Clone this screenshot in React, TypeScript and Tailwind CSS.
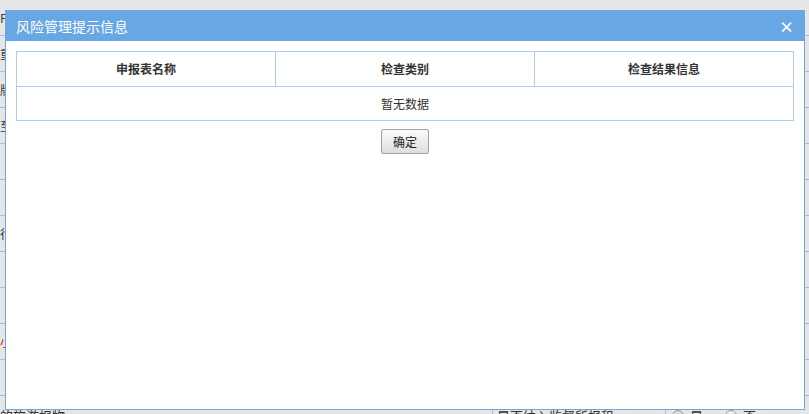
const ROWS = [
  { y: 0, left: 'F', right: '' },
  { y: 36, left: '重', right: '' },
  { y: 72, left: '牌', right: '' },
  { y: 108, left: '至', right: '' },
  { y: 144, left: '', right: '' },
  { y: 180, left: '', right: '' },
  { y: 216, left: '行', right: '' },
  { y: 252, left: '', right: '' },
  { y: 288, left: '', right: '' },
  { y: 324, left: '小', right: '' },
  { y: 360, left: '', right: '' },
]

function BackgroundPage() {
  return (
    <div className="flex flex-col bg-[#e6e6e6]">
      {ROWS.map((r, i) => (
        <div
          key={i}
          className="flex h-[36px] shrink-0 items-center border-b border-[#a3bedc] text-[12px] text-[#333]"
        >
          <span className={i === 9 ? 'text-[#b22]' : ''}>{r.left}</span>
        </div>
      ))}
      <div className="flex h-[36px] shrink-0 items-start text-[13px] text-[#333]">
        <div className="w-[492px] pt-[13px] leading-none">的旅游报物</div>
        <div className="w-[173px] border-l border-[#a3bedc] pl-[4px] pt-[13px] leading-none">
          是否纳入监督所报租
        </div>
        <div className="flex items-center gap-[6px] border-l border-[#a3bedc] pl-[6px] pt-[13px] leading-none">
          <span className="inline-block h-[12px] w-[12px] rounded-full border border-[#999] bg-[#ddd]" />
          <span>是</span>
          <span className="ml-[16px] inline-block h-[12px] w-[12px] rounded-full border border-[#999] bg-[#eee]" />
          <span>否</span>
        </div>
      </div>
    </div>
  )
}

function RiskDialog() {
  return (
    <div className="absolute left-[5px] top-[10px] flex h-[400px] w-[800px] flex-col border border-[#6fa6e1] bg-white">
      <div className="flex h-[30px] shrink-0 items-center justify-between bg-[#67a7e3] pl-[10px] pr-[10px] text-white">
        <span className="text-[14px] leading-none">风险管理提示信息</span>
        <span className="text-[15px] font-bold leading-none">×</span>
      </div>
      <div className="flex flex-col items-center px-[10px] pt-[10px]">
        <table className="w-full border-collapse text-[12px] text-[#333]">
          <thead>
            <tr className="h-[35px]">
              <th className="w-1/3 border border-[#abcdee] font-bold">申报表名称</th>
              <th className="w-1/3 border border-[#abcdee] font-bold">检查类别</th>
              <th className="w-1/3 border border-[#abcdee] font-bold">检查结果信息</th>
            </tr>
          </thead>
          <tbody>
            <tr className="h-[34px]">
              <td colSpan={3} className="border border-[#abcdee] text-center">
                暂无数据
              </td>
            </tr>
          </tbody>
        </table>
        <button className="mt-[8px] h-[25px] w-[48px] rounded-[2px] border border-[#a3a3a3] bg-gradient-to-b from-[#fbfbfb] to-[#dedede] text-[12px] text-[#222]">
          确定
        </button>
      </div>
    </div>
  )
}

export default function App() {
  return (
    <div
      className="relative h-[414px] w-[809px] overflow-hidden bg-[#e6e6e6]"
      style={{ fontFamily: '"Noto Sans CJK SC", "Noto Sans", sans-serif' }}
    >
      <BackgroundPage />
      <RiskDialog />
    </div>
  )
}
